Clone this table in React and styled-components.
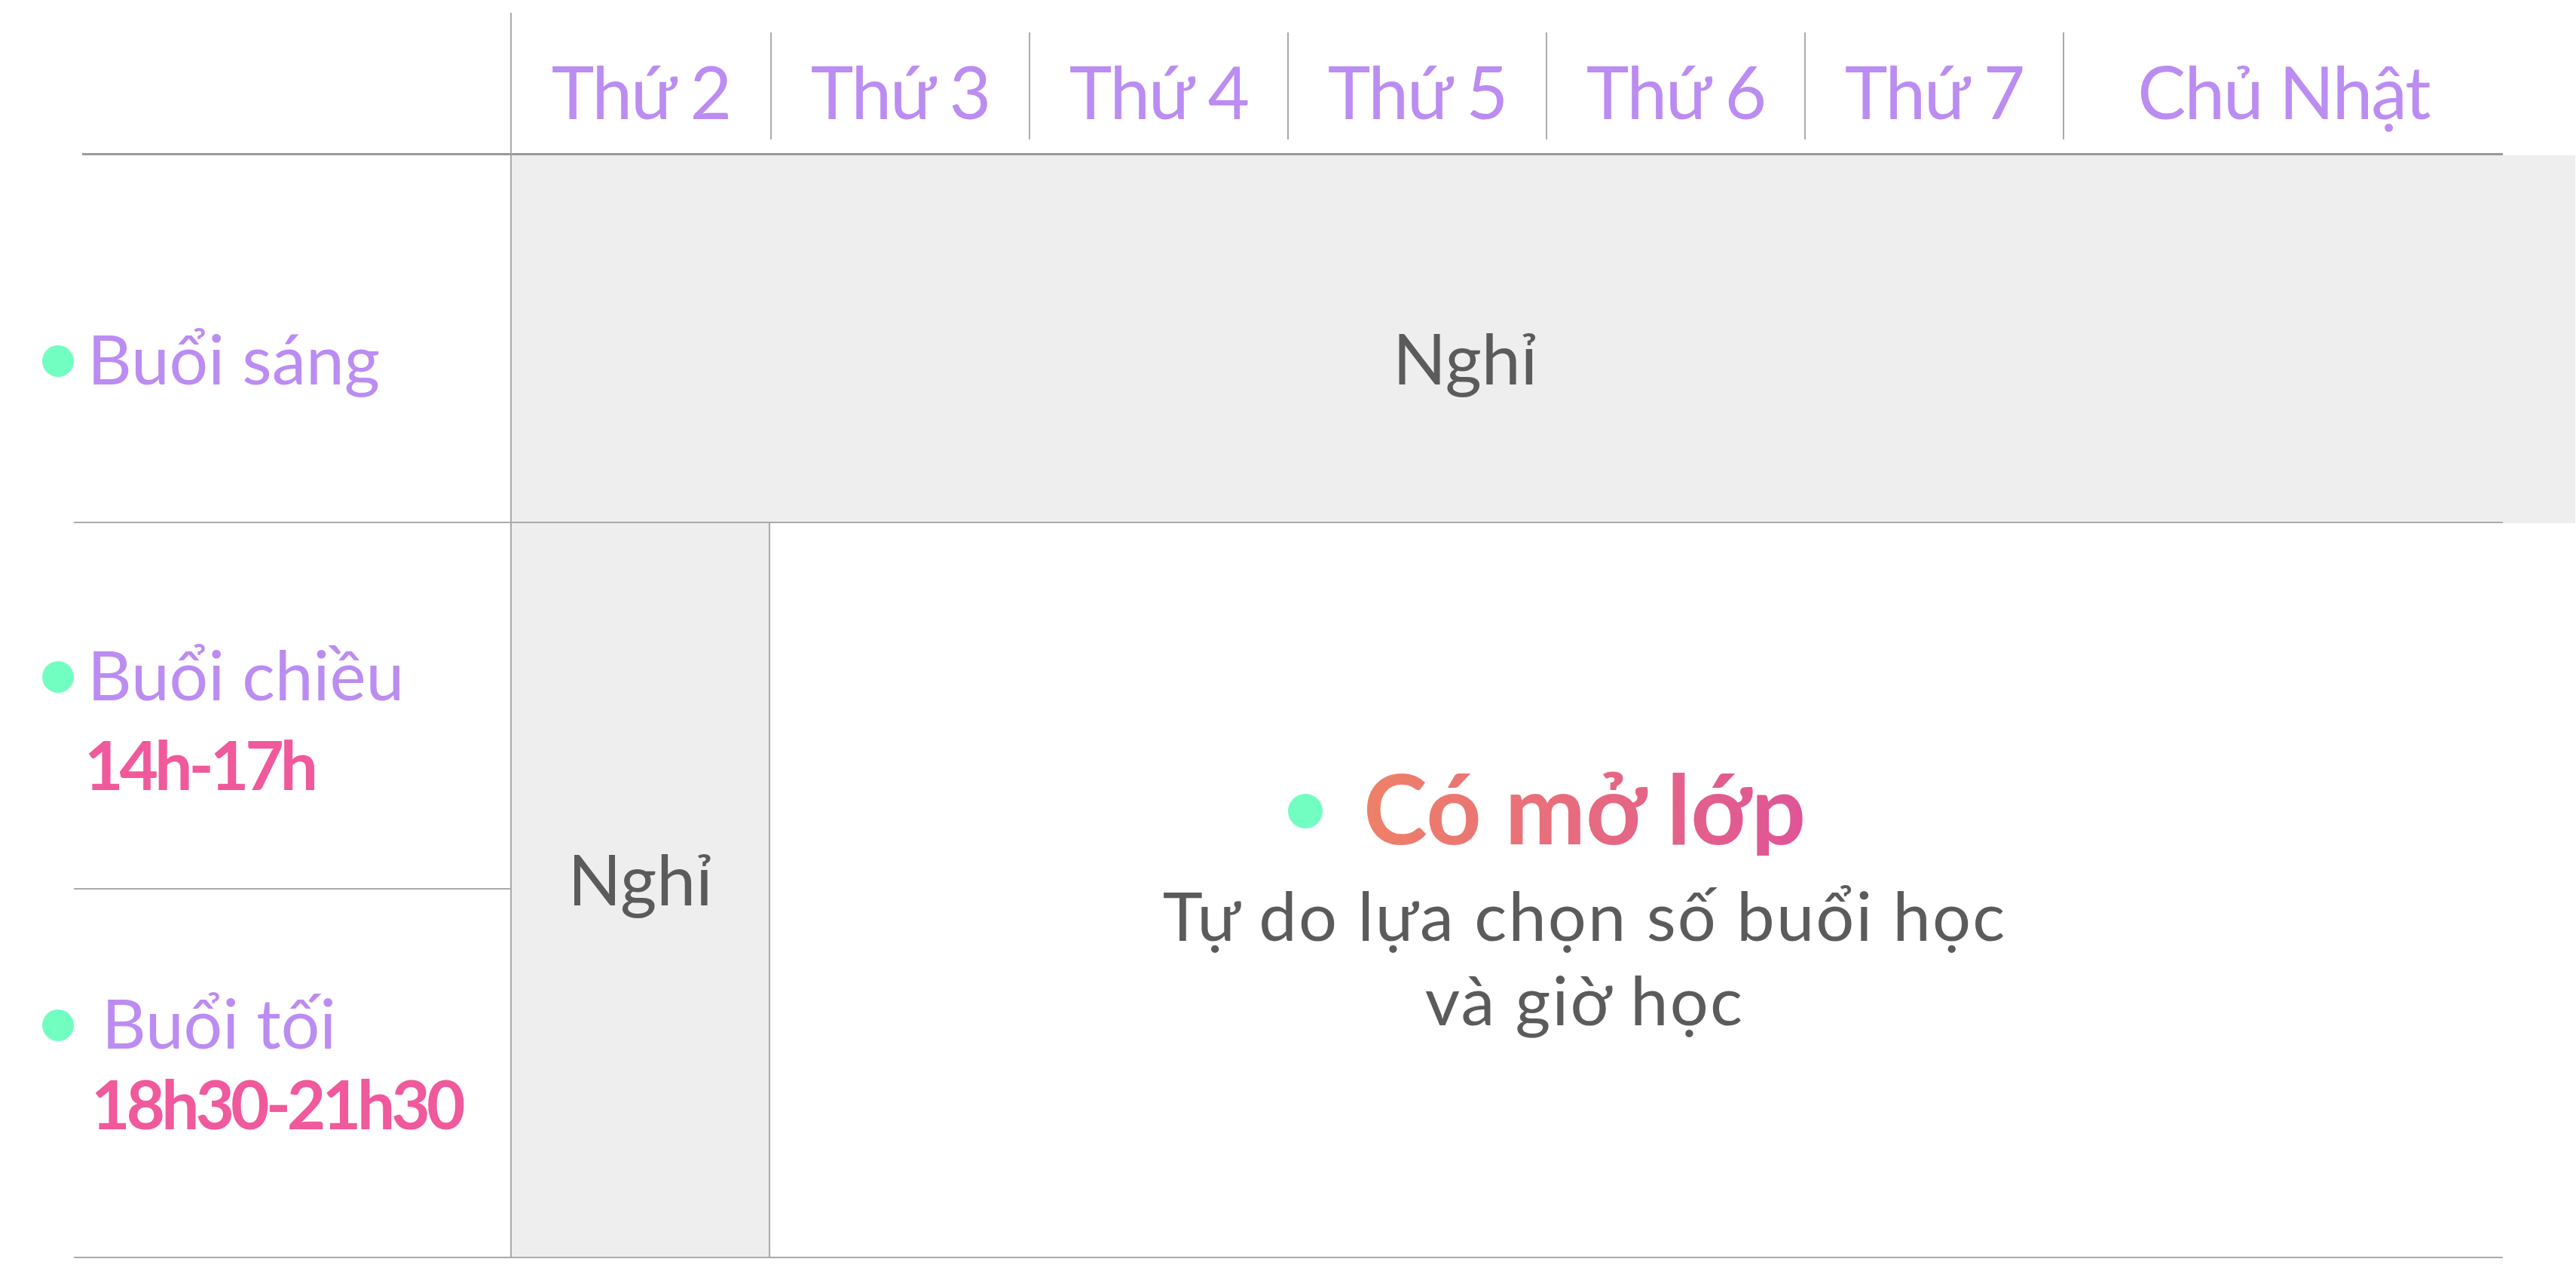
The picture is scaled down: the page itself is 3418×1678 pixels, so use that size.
import styled, { createGlobalStyle } from "styled-components"

const GlobalStyle = createGlobalStyle`
  html, body {
    margin: 0;
    padding: 0;
    background: #ffffff;
  }
  body {
    font-family: Lato, "Noto Sans", sans-serif;
    overflow: hidden;
  }
  * {
    box-sizing: border-box;
  }
`;

const days = ["Thứ 2", "Thứ 3", "Thứ 4", "Thứ 5", "Thứ 6", "Thứ 7", "Chủ Nhật"];

function SessionLabel({ row, top, gap, name, time, timeIndent, timeGap }) {
  return (
    <LabelCell $row={row} $top={top}>
      <LabelRow $gap={gap}>
        <Dot />
        <LabelText>{name}</LabelText>
      </LabelRow>
      {time && <TimeText $indent={timeIndent} $gap={timeGap}>{time}</TimeText>}
    </LabelCell>
  );
}

function App() {
  return (
    <>
      <GlobalStyle />
      <Schedule>
        <Corner />
        {days.map((day, i) => (
          <DayCell key={day}>
            <DayInner $divided={i > 0}>{day}</DayInner>
          </DayCell>
        ))}

        <SessionLabel row={2} top={223} gap={18} name="Buổi sáng" />
        <MorningOff>Nghỉ</MorningOff>

        <SessionLabel row={3} top={154} gap={18} name="Buổi chiều" time="14h-17h" timeIndent={14} timeGap={29} />
        <MondayOff>Nghỉ</MondayOff>
        <OpenCell>
          <OpenTitle>
            <TitleDot />
            <TitleText>Có mở lớp</TitleText>
          </OpenTitle>
          <OpenNote>
            Tự do lựa chọn số buổi học
            <br />
            và giờ học
          </OpenNote>
        </OpenCell>

        <SessionLabel row={4} top={130} gap={37} name="Buổi tối" time="18h30-21h30" timeIndent={23} timeGap={17} />
      </Schedule>
    </>
  );
}

export default App;

const Schedule = styled.div`
  display: grid;
  grid-template-columns: 581px repeat(6, 343px) 584px;
  grid-template-rows: 189px 488px 486px 489px;
  margin: 17px 0 0 98px;
  width: 3224px;
`;

const Corner = styled.div`
  grid-column: 1;
  grid-row: 1;
  margin-left: 11px;
  border-right: 2px solid #aaaaaa;
  border-bottom: 3px solid #9a9a9a;
`;

const DayCell = styled.div`
  padding: 26px 0 18px;
  border-bottom: 3px solid #9a9a9a;
`;

const DayInner = styled.div`
  height: 100%;
  display: flex;
  align-items: center;
  justify-content: center;
  padding-top: 14px;
  border-left: ${(p) => (p.$divided ? "2px solid #aaaaaa" : "none")};
  color: #bb8cf1;
  font-size: 96px;
  line-height: 96px;
  letter-spacing: -2px;
  white-space: nowrap;
`;

const LabelCell = styled.div`
  grid-column: 1;
  grid-row: ${(p) => p.$row};
  padding-top: ${(p) => p.$top}px;
  border-right: 2px solid #aaaaaa;
  border-bottom: 2px solid #aaaaaa;
`;

const LabelRow = styled.div`
  display: flex;
  align-items: flex-start;
  gap: ${(p) => p.$gap}px;
`;

const Dot = styled.span`
  flex: none;
  width: 42px;
  height: 42px;
  margin: 29px 0 0 -42px;
  border-radius: 50%;
  background: #72fec0;
`;

const LabelText = styled.span`
  color: #bb8cf1;
  font-size: 91px;
  line-height: 91px;
  white-space: nowrap;
`;

const TimeText = styled.div`
  margin: ${(p) => p.$gap}px 0 0 ${(p) => p.$indent}px;
  color: #f0599c;
  font-size: 89px;
  line-height: 91px;
  font-weight: 700;
  letter-spacing: -5px;
  white-space: nowrap;
`;

const OffText = styled.div`
  display: flex;
  justify-content: center;
  color: #5b5b5b;
  font-size: 93px;
  line-height: 93px;
  background: #eeeeee;
  border-bottom: 2px solid #aaaaaa;
`;

const MorningOff = styled(OffText)`
  grid-column: 2 / 9;
  grid-row: 2;
  padding: 222px 112px 0 0;
  box-shadow: 96px 0 0 #eeeeee;
`;

const MondayOff = styled(OffText)`
  grid-column: 2;
  grid-row: 3 / 5;
  padding-top: 425px;
  border-right: 2px solid #aaaaaa;
`;

const OpenCell = styled.div`
  grid-column: 3 / 9;
  grid-row: 3 / 5;
  display: flex;
  flex-direction: column;
  align-items: center;
  padding: 313px 138px 0 0;
  border-bottom: 2px solid #aaaaaa;
`;

const OpenTitle = styled.div`
  display: flex;
  align-items: flex-start;
  gap: 54px;
`;

const TitleDot = styled.span`
  flex: none;
  width: 46px;
  height: 46px;
  margin: 46px 0 0 -100px;
  border-radius: 50%;
  background: #72fec0;
`;

const TitleText = styled.span`
  font-size: 128px;
  line-height: 128px;
  font-weight: 700;
  white-space: nowrap;
  background: linear-gradient(90deg, #ee8167 0%, #df5498 100%);
  -webkit-background-clip: text;
  background-clip: text;
  color: transparent;
`;

const OpenNote = styled.div`
  margin-top: 22px;
  color: #5b5b5b;
  font-size: 90px;
  line-height: 112px;
  letter-spacing: 2.2px;
  text-align: center;
  white-space: nowrap;
`;
